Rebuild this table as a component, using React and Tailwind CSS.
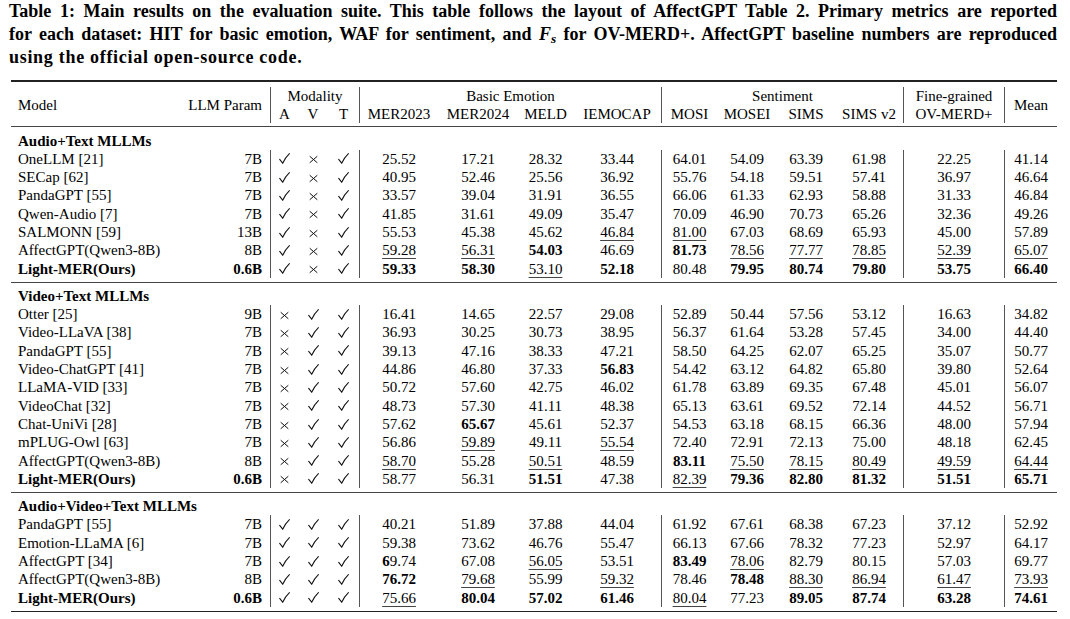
import React from "react";

// value prefixes: b: bold, u: underline, x: first digit bold
const sections = [
  {
    title: "Audio+Text MLLMs",
    mod: "cxc",
    rows: [
      ["OneLLM [21]", "7B", "25.52 17.21 28.32 33.44 64.01 54.09 63.39 61.98 22.25 41.14"],
      ["SECap [62]", "7B", "40.95 52.46 25.56 36.92 55.76 54.18 59.51 57.41 36.97 46.64"],
      ["PandaGPT [55]", "7B", "33.57 39.04 31.91 36.55 66.06 61.33 62.93 58.88 31.33 46.84"],
      ["Qwen-Audio [7]", "7B", "41.85 31.61 49.09 35.47 70.09 46.90 70.73 65.26 32.36 49.26"],
      ["SALMONN [59]", "13B", "55.53 45.38 45.62 u:46.84 u:81.00 67.03 68.69 65.93 45.00 57.89"],
      ["AffectGPT(Qwen3-8B)", "8B", "u:59.28 u:56.31 b:54.03 46.69 b:81.73 u:78.56 u:77.77 u:78.85 u:52.39 u:65.07"],
      ["Light-MER(Ours)", "0.6B", "b:59.33 b:58.30 u:53.10 b:52.18 80.48 b:79.95 b:80.74 b:79.80 b:53.75 b:66.40", true],
    ],
  },
  {
    title: "Video+Text MLLMs",
    mod: "xcc",
    rows: [
      ["Otter [25]", "9B", "16.41 14.65 22.57 29.08 52.89 50.44 57.56 53.12 16.63 34.82"],
      ["Video-LLaVA [38]", "7B", "36.93 30.25 30.73 38.95 56.37 61.64 53.28 57.45 34.00 44.40"],
      ["PandaGPT [55]", "7B", "39.13 47.16 38.33 47.21 58.50 64.25 62.07 65.25 35.07 50.77"],
      ["Video-ChatGPT [41]", "7B", "44.86 46.80 37.33 b:56.83 54.42 63.12 64.82 65.80 39.80 52.64"],
      ["LLaMA-VID [33]", "7B", "50.72 57.60 42.75 46.02 61.78 63.89 69.35 67.48 45.01 56.07"],
      ["VideoChat [32]", "7B", "48.73 57.30 41.11 48.38 65.13 63.61 69.52 72.14 44.52 56.71"],
      ["Chat-UniVi [28]", "7B", "57.62 b:65.67 45.61 52.37 54.53 63.18 68.15 66.36 48.00 57.94"],
      ["mPLUG-Owl [63]", "7B", "56.86 u:59.89 49.11 u:55.54 72.40 72.91 72.13 75.00 48.18 62.45"],
      ["AffectGPT(Qwen3-8B)", "8B", "u:58.70 55.28 u:50.51 48.59 b:83.11 u:75.50 u:78.15 u:80.49 u:49.59 u:64.44"],
      ["Light-MER(Ours)", "0.6B", "58.77 56.31 b:51.51 47.38 u:82.39 b:79.36 b:82.80 b:81.32 b:51.51 b:65.71", true],
    ],
  },
  {
    title: "Audio+Video+Text MLLMs",
    mod: "ccc",
    rows: [
      ["PandaGPT [55]", "7B", "40.21 51.89 37.88 44.04 61.92 67.61 68.38 67.23 37.12 52.92"],
      ["Emotion-LLaMA [6]", "7B", "59.38 73.62 46.76 55.47 66.13 67.66 78.32 77.23 52.97 64.17"],
      ["AffectGPT [34]", "7B", "x:69.74 67.08 u:56.05 53.51 b:83.49 u:78.06 82.79 80.15 57.03 69.77"],
      ["AffectGPT(Qwen3-8B)", "8B", "b:76.72 u:79.68 55.99 u:59.32 78.46 b:78.48 u:88.30 u:86.94 u:61.47 u:73.93"],
      ["Light-MER(Ours)", "0.6B", "u:75.66 b:80.04 b:57.02 b:61.46 u:80.04 77.23 b:89.05 b:87.74 b:63.28 b:74.61", true],
    ],
  },
];

const sepCols = [0, 4, 8, 9];

function Check() {
  return (
    <svg width="11" height="11" viewBox="0 0 11 11" fill="none" stroke="#111" strokeWidth="1.05" strokeLinecap="round">
      <path d="M0.7 6.4 L3.7 10.2 Q6.2 4.6 10.4 0.6" />
    </svg>
  );
}

function Cross() {
  return (
    <svg width="9" height="9" viewBox="0 0 9 9" fill="none" stroke="#111" strokeWidth="1" strokeLinecap="round" className="mt-[2px]">
      <path d="M1 1.5 L8 7.5 M8 1.5 L1 7.5" />
    </svg>
  );
}

function Value({ v }) {
  if (v.startsWith("b:")) return <span className="font-bold">{v.slice(2)}</span>;
  if (v.startsWith("u:"))
    return <span className="underline decoration-[#444] decoration-1 underline-offset-[3px]">{v.slice(2)}</span>;
  if (v.startsWith("x:"))
    return (
      <span>
        <b>{v.slice(2, 3)}</b>
        {v.slice(3)}
      </span>
    );
  return <span>{v}</span>;
}

function Row({ row, mod }) {
  const [name, param, vals, ours] = row;
  return (
    <>
      <div className={`pl-[7px] ${ours ? "font-bold" : ""}`}>{name}</div>
      <div className={`pr-2 text-right ${ours ? "font-bold" : ""}`}>{param}</div>
      {mod.split("").map((m, i) => (
        <div key={i} className={`flex items-center justify-center ${i === 0 ? "border-l border-[#555]" : ""}`}>
          {m === "c" ? <Check /> : <Cross />}
        </div>
      ))}
      {vals.split(" ").map((v, i) => (
        <div key={i} className={`text-center ${sepCols.includes(i) ? "border-l border-[#555]" : ""}`}>
          <Value v={v} />
        </div>
      ))}
    </>
  );
}

const grid =
  "grid grid-cols-[174px_85px_28px_30px_31px_79px_80px_55px_88px_56px_60px_58px_68px_101px_53px]";

export default function App() {
  return (
    <div className="w-[1070px] h-[619px] bg-white text-black font-['Liberation_Serif',serif] overflow-hidden">
      <div className="ml-[9px] w-[1048px] text-[18px] leading-[23px] font-bold">
        <div className="whitespace-nowrap text-justify [text-align-last:justify]">
          Table 1: Main results on the evaluation suite. This table follows the layout of AffectGPT Table 2. Primary
          metrics are reported
        </div>
        <div className="whitespace-nowrap text-justify [text-align-last:justify]">
          for each dataset: HIT for basic emotion, WAF for sentiment, and <i>F</i>
          <sub className="italic">s</sub> for OV-MERD+. AffectGPT baseline numbers are reproduced
        </div>
        <div className="tracking-[0.7px]">using the official open-source code.</div>
      </div>

      <div className="ml-[11px] mt-[11px] w-[1046px] text-[15px]">
        <div className="h-[1.5px] bg-[#222]" />
        <div className={`${grid} grid-rows-[18px_18px] leading-[18px] pt-[5px] pb-[3px]`}>
          <div className="row-span-2 flex items-center pl-[7px]">Model</div>
          <div className="row-span-2 flex items-center justify-end pr-2">LLM Param</div>
          <div className="col-span-3 text-center border-l border-[#555]">Modality</div>
          <div className="col-span-4 text-center border-l border-[#555]">Basic Emotion</div>
          <div className="col-span-4 text-center border-l border-[#555]">Sentiment</div>
          <div className="text-center border-l border-[#555]">Fine-grained</div>
          <div className="row-span-2 flex items-center justify-center border-l border-[#555]">Mean</div>
          <div className="text-center border-l border-[#555]">A</div>
          <div className="text-center">V</div>
          <div className="text-center">T</div>
          <div className="text-center border-l border-[#555]">MER2023</div>
          <div className="text-center">MER2024</div>
          <div className="text-center">MELD</div>
          <div className="text-center">IEMOCAP</div>
          <div className="text-center border-l border-[#555]">MOSI</div>
          <div className="text-center">MOSEI</div>
          <div className="text-center">SIMS</div>
          <div className="text-center">SIMS v2</div>
          <div className="text-center border-l border-[#555]">OV-MERD+</div>
        </div>

        {sections.map((s, si) => (
          <div key={s.title}>
            <div className="h-px bg-[#444]" />
            <div className={`${si === 0 ? "pt-[5px]" : "pt-[4px]"} pb-[4px]`}>
              <div className="pl-[7px] font-bold h-[18.3px] leading-[18.3px]">{s.title}</div>
              <div className={`${grid} auto-rows-[18.3px] leading-[18.3px]`}>
                {s.rows.map((r, i) => (
                  <Row key={i} row={r} mod={s.mod} />
                ))}
              </div>
            </div>
          </div>
        ))}
        <div className="h-[1.5px] bg-[#222]" />
      </div>
    </div>
  );
}
